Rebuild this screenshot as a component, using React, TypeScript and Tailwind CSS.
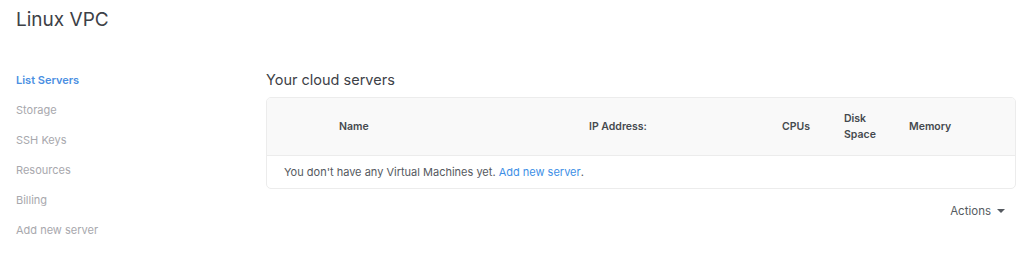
import { useState } from 'react';

const NAV = ['List Servers', 'Storage', 'SSH Keys', 'Resources', 'Billing', 'Add new server'];

export default function App() {
  const [active] = useState('List Servers');

  return (
    <div className="min-h-[255px] w-[1024px] bg-white text-[#3f4348]" style={{ fontFamily: 'Inter, "Noto Sans", sans-serif' }}>
      <h1 className="pl-4 pt-[6px] text-[19px] leading-[28px] font-normal text-[#3d4147]">Linux VPC</h1>

      <div className="flex pt-[31px]">
        {/* Sidebar */}
        <nav className="w-[266px] shrink-0 pl-4">
          {NAV.map(item => (
            <div
              key={item}
              className={
                item === active
                  ? 'h-[30px] text-[11px] leading-[30px] font-semibold text-[#4b8fe2]'
                  : 'h-[30px] text-[11px] leading-[30px] text-[#a8a8ad]'
              }
            >
              {item}
            </div>
          ))}
        </nav>

        {/* Main */}
        <div className="w-[750px]">
          <h2 className="text-[14.5px] leading-[30px] text-[#3d4147]">Your cloud servers</h2>

          <div className="mt-[2px] overflow-hidden rounded-[5px] border border-[#ececec]">
            <div className="grid h-[58px] grid-cols-[72px_250px_193px_62px_65px_1fr] items-center border-b border-[#ececec] bg-[#f9f9f9] text-[10.5px] font-semibold leading-[16px] text-[#45494e]">
              <div />
              <div>Name</div>
              <div>IP Address:</div>
              <div>CPUs</div>
              <div>Disk<br />Space</div>
              <div>Memory</div>
            </div>
            <div className="flex h-[32px] items-center pl-[17px] text-[11px] text-[#55595e]">
              You don't have any Virtual Machines yet.&nbsp;
              <a href="#" className="text-[#3d8fe6]">Add new server</a>.
            </div>
          </div>

          <div className="mt-[14px] flex justify-end pr-[11px]">
            <button className="flex items-center gap-[6px] text-[11.5px] leading-[16px] text-[#555a60]">
              Actions
              <span className="h-0 w-0 border-x-[4px] border-t-[4px] border-x-transparent border-t-[#555a60]" />
            </button>
          </div>
        </div>
      </div>
    </div>
  );
}
